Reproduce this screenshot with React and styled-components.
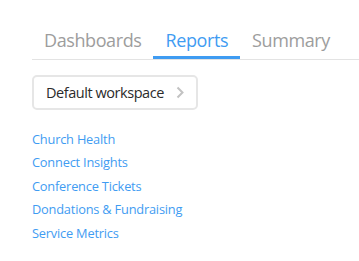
import React, { useState } from 'react';
import styled, { createGlobalStyle } from 'styled-components';

const GlobalStyle = createGlobalStyle`
  body {
    margin: 0;
    background: #fff;
    font-family: "Open Sans", "Noto Sans", sans-serif;
  }
`;

const Page = styled.div`
  padding: 26px 0 0 32px;
`;

const TabBar = styled.div`
  display: flex;
  border-bottom: 1px solid #e3e3e3;
`;

const Tab = styled.div`
  padding: 1px 12px 3px;
  font-size: 18px;
  line-height: 26px;
  letter-spacing: -0.4px;
  color: ${({ active }) => (active ? '#3f9cf2' : '#9d9d9d')};
  border-bottom: 3px solid ${({ active }) => (active ? '#3f9cf2' : 'transparent')};
  cursor: pointer;
`;

const WorkspaceButton = styled.button`
  margin-top: 15px;
  width: 166px;
  height: 35px;
  display: flex;
  align-items: center;
  justify-content: space-between;
  padding: 0 12px;
  background: #fff;
  border: 2px solid #e6e6e6;
  border-radius: 5px;
  font-family: inherit;
  font-size: 14.5px;
  letter-spacing: -0.45px;
  color: #2b2b2b;
  cursor: pointer;
`;

const ReportList = styled.ul`
  list-style: none;
  margin: 18px 0 0;
  padding: 0;
`;

const ReportLink = styled.li`
  font-size: 12.8px;
  line-height: 23.4px;
  letter-spacing: -0.2px;
  color: #3f9cf2;
  cursor: pointer;
`;

const tabs = ['Dashboards', 'Reports', 'Summary'];
const reports = [
  'Church Health',
  'Connect Insights',
  'Conference Tickets',
  'Dondations & Fundraising',
  'Service Metrics',
];

export default function App() {
  const [current, setCurrent] = useState('Reports');
  return (
    <Page>
      <GlobalStyle />
      <TabBar>
        {tabs.map((t) => (
          <Tab key={t} active={t === current} onClick={() => setCurrent(t)}>
            {t}
          </Tab>
        ))}
      </TabBar>
      <WorkspaceButton>
        Default workspace
        <svg width="8" height="13" viewBox="0 0 8 13">
          <path d="M1.5 1.5 L6.5 6.5 L1.5 11.5" fill="none" stroke="#c2c2c2" strokeWidth="2" />
        </svg>
      </WorkspaceButton>
      <ReportList>
        {reports.map((r) => (
          <ReportLink key={r}>{r}</ReportLink>
        ))}
      </ReportList>
    </Page>
  );
}
